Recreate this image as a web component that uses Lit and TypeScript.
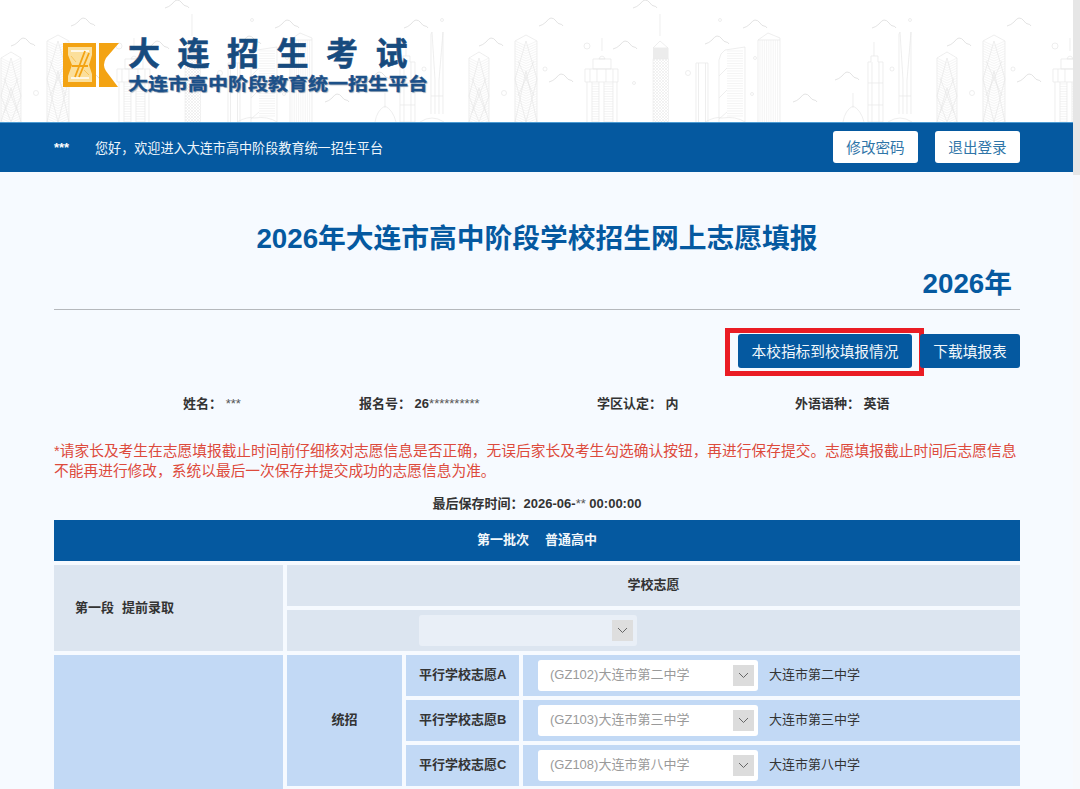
import { LitElement, html, css, svg } from "lit";
import { customElement } from "lit/decorators.js";

const range = (a: number, b: number, step: number) => {
  const out: number[] = [];
  for (let i = a; i < b; i += step) out.push(i);
  return out;
};

const hlines = (x: number, y1: number, w: number, y2: number, step: number) =>
  range(y1, y2, step).map((y) => svg`<line class="ht" x1=${x} y1=${y} x2=${x + w} y2=${y}></line>`);

const vlines = (x1: number, x2: number, step: number, y1: number) =>
  range(x1, x2, step).map((x) => svg`<line class="ht" x1=${x} y1=${y1} x2=${x} y2="122"></line>`);

const lattice = (x: number, top: number, w: number) => {
  const chevrons = range(top, 122, 2.5).map(
    (y) => svg`<path class="ht" d="M${x} ${y}L${x + w / 2} ${y + 5}L${x + w} ${y}"></path>`
  );
  const m = x + w / 2;
  return svg`
    <path class="ln" d="M${x} 122V${top}L${m} ${top - 6}L${x + w} ${top}V122"></path>
    ${chevrons}
    <path class="dk" d="M${m} ${top}L${x} ${top + 38}L${m} 122L${x + w} ${top + 38}ZM${x} 122L${m} ${top + 30}L${x + w} 122M${x + 3} ${top + 20}L${x + w - 3} ${top + 55}M${x + w - 3} ${top + 20}L${x + 3} ${top + 55}"></path>
  `;
};

const cloud = (x: number, y: number) =>
  svg`<path class="cl" d="M${x} ${y}q4 -1 7 -4q3 -4 5 -4q3 0 5 3q2 3 4 3q2 0 3 2"></path>`;
const dot = (x: number, y: number, r: number) =>
  svg`<circle class="ln" cx=${x} cy=${y} r=${r}></circle>`;

const skylineUnit = svg`
  <!-- pagoda -->
  <path class="ln" d="M602 38V51M599 59a3.2 4.5 0 0 1 6 0ZM593 59H611V69H593ZM585 69H618V82H585ZM590 69V82M597 69V82M606 69V82M613 69V82M587 82V122M592 82V122M599 82V122M604 82V122M613 82V122M617 82V122"></path>
  ${hlines(592, 84, 7, 122, 2.5)}${hlines(604, 84, 9, 122, 2.5)}
  <!-- tv tower -->
  <path class="ln" d="M660 14V36M653 48L660 41L668 48Z"></path>
  <rect class="tvb" x="653" y="48" width="15.5" height="11"></rect>
  <rect class="xh" x="653" y="59" width="15.5" height="63"></rect>
  <!-- narrow block -->
  <path class="ln" d="M696 122V63H708V122M698.5 63V122M705.5 63V122"></path>
  <!-- curved -->
  <path class="ln" d="M719 122V60Q720 53 725 50L745 47V122M719 76L727 68M719 98L727 90M719 119L727 112M705 122Q716 116 722 118Q736 116 745 122"></path>
  ${hlines(727, 51, 16, 118, 2.5)}
  <!-- block -->
  <path class="ln" d="M758 122V40L768 33L780 38V122M758 40H780"></path>
  ${vlines(760, 779, 2.2, 40)}
  <!-- dome -->
  <path class="ln" d="M853 93V108M843 122Q845 110 853 106Q861 110 864 122"></path>
  <!-- spire -->
  <path class="ln" d="M874 42V56M871 56H878V62H883V122H868V62H871ZM868 83H883M868 105H883M872 62V122M879 62V122"></path>
  <!-- twin -->
  <path class="ln" d="M899 114V34L900 32L903 80V114M911 114V32L907 80V114M899 96H911M888 122Q900 114 912 122"></path>
  ${lattice(937, 58, 20)}
  ${lattice(983, 41, 22)}
  ${cloud(613, 49)}${cloud(705, 44)}${cloud(743, 28)}${cloud(793, 102)}${cloud(835, 80)}
  ${cloud(872, 28)}${cloud(947, 46)}${cloud(1007, 26)}${cloud(1017, 82)}${cloud(633, 8)}
  ${dot(587, 46, 3)}${dot(634, 83, 1.5)}${dot(688, 73, 2.5)}${dot(720, 20, 1.5)}${dot(755, 58, 1.5)}
  ${dot(752, 94, 1.5)}${dot(892, 69, 2)}${dot(972, 93, 2.5)}${dot(1013, 69, 2)}${dot(910, 20, 1.5)}
`;

@customElement("app-root")
export class AppRoot extends LitElement {
  static styles = css`
    :host { display: block; width: 1080px; height: 789px; overflow: hidden; background: #f6faff; color: #222;
      font-family: "Liberation Sans", "Noto Sans CJK SC", sans-serif; font-size: 13px; }
    .page { display: flex; height: 789px; }
    .main { width: 1073px; flex: none; }
    .scroll { width: 7px; flex: none; background: #f7f9fc; }
    .thumb { height: 175px; background: #e6e6e6; }
    .head { position: relative; height: 122px; background: #fff; overflow: hidden; display: flex; align-items: flex-start; padding-left: 63px; box-sizing: border-box; }
    .sky { position: absolute; left: 0; top: 0; }
    .sky .ln { fill: none; stroke: #e6e6e6; stroke-width: .7; }
    .sky .ht { stroke: #ececec; stroke-width: .6; fill: none; }
    .sky .dk { stroke: #e4e4e4; stroke-width: .6; fill: none; }
    .sky .cl { stroke: #dcdcdc; stroke-width: .8; fill: none; }
    .sky .tvb { fill: #ececec; }
    .sky .xh { fill: url(#xh); stroke: #e8e8e8; stroke-width: .5; }
    .brand { position: relative; display: flex; gap: 9px; margin-top: 36px; }
    .mark { margin-top: 7px; }
    .names { display: flex; flex-direction: column; }
    .big { font-size: 32px; line-height: 37px; font-weight: 700; letter-spacing: 17.5px; color: #174b7e; white-space: nowrap; -webkit-text-stroke: .6px #174b7e; }
    .sub { font-size: 20px; line-height: 20px; font-weight: 700; color: #1c5088; white-space: nowrap; transform-origin: left top; transform: scaleY(.88); margin-top: 2px; -webkit-text-stroke: .4px #1c5088; text-shadow: 1px 1px 1px #9aa8b8; }
    .bar { height: 50px; box-sizing: border-box; background: #0559a0; border-top: 1px solid #4d9bd2; color: #eef5fb; display: flex; align-items: center; padding: 0 53px 1px 54px; }
    .stars { width: 41px; font-weight: 700; color: #fff; }
    .hello { flex: 1; font-size: 13.1px; }
    .light { height: 32px; width: 85px; margin-left: 17px; background: #fff; color: #2f75a8; border: 0; border-radius: 3px; font: inherit; font-size: 14.6px; padding: 0 0 2px; }
    .body { padding: 47px 53px 0 54px; }
    h1 { margin: 0; font-size: 27.75px; line-height: 40px; font-weight: 700; color: #0559a0; text-align: center; }
    .year { margin-top: 5px; padding-right: 8px; text-align: right; }
    hr { margin: 5px 0 0; border: 0; height: 1px; background: #b5b8bc; }
    .actions { display: flex; justify-content: flex-end; gap: 8px; margin-top: 24px; }
    .dark { position: relative; height: 34px; background: #0559a0; color: #f2f7fb; border: 0; border-radius: 3px; font: inherit; font-size: 14.7px; padding: 0 0 1px; }
    .w1 { width: 174px; }
    .w2 { width: 100px; }
    .mark-box { position: absolute; left: -13px; top: -6px; width: 199px; height: 48px; box-sizing: border-box; border: 5px solid #ea1c24; pointer-events: none; }
    .info { display: grid; grid-template-columns: 176px 238px 198px 1fr; margin-top: 26px; padding-left: 129px; line-height: 20px; font-weight: 700; color: #333; }
    .mask { font-weight: 400; color: #555; }
    .notice { margin: 27px 0 0; font-size: 14.73px; line-height: 20px; color: #dd4a3c; white-space: nowrap; }
    .saved { margin-top: 13px; line-height: 20px; text-align: center; font-weight: 700; color: #333; }
    .band { margin-top: 6px; height: 41px; padding-bottom: 4px; box-sizing: border-box; background: #0559a0; color: #f2f7fb; font-weight: 700; display: flex; align-items: center; justify-content: center; gap: 16px; }
    .grid { display: grid; grid-template-columns: 229px 115px 113px 1fr; grid-auto-rows: 41px; gap: 4px; margin-top: 4px; }
    .cell { display: flex; align-items: center; font-weight: 700; color: #333; min-width: 0; box-sizing: border-box; }
    .up { padding-bottom: 4px; }
    .gray { background: #dce5f0; }
    .blue { background: #c2d9f5; }
    .seg { grid-row: span 2; padding-left: 21px; gap: 8px; }
    .wide { grid-column: 2 / 5; justify-content: center; }
    .pick { grid-column: 2 / 5; padding-left: 132px; }
    .tall { grid-row: span 4; }
    .span3 { grid-row: span 3; justify-content: center; }
    .label { padding-left: 13px; }
    .choice { padding-left: 15px; font-weight: 400; gap: 11px; }
    .txt { padding-bottom: 4px; }
    .sel { width: 220px; height: 31px; background: #fff; border-radius: 3px; display: flex; align-items: center; justify-content: space-between; padding: 0 4px 0 12px; box-sizing: border-box; color: #9a9a9a; font-weight: 400; }
    .sel.off { width: 218px; background: #e9eff7; }
    .arrow { width: 21px; height: 21px; background: #dcdcdc; display: flex; align-items: center; justify-content: center; }
    .sel.off .arrow { background: #dedede; }
  `;

  private select(text: string, off = false) {
    return html`<div class="sel ${off ? "off" : ""}"><span class="txt">${text}</span>
      <span class="arrow"><svg width="11" height="7" viewBox="0 0 11 7"><path d="M1 1l4.5 4.5L10 1" fill="none" stroke="#666" stroke-width="1"/></svg></span></div>`;
  }

  private row(label: string, code: string, name: string) {
    return html`<div class="cell blue label up">${label}</div>
      <div class="cell blue choice">${this.select(`(${code})${name}`)}<span class="txt">${name}</span></div>`;
  }

  render() {
    return html`<div class="page">
      <div class="main">
        <header class="head">
          <svg class="sky" width="1073" height="122" viewBox="0 0 1073 122">
            <defs>
              <pattern id="xh" width="3" height="3" patternUnits="userSpaceOnUse">
                <path d="M0 0L3 3M3 0L0 3" stroke="#eaeaea" stroke-width=".6" fill="none"></path>
              </pattern>
            </defs>
            ${[-936, -468, 0, 468].map((dx) => svg`<g transform="translate(${dx} 0)">${skylineUnit}</g>`)}
          </svg>
          <div class="brand">
            <svg class="mark" width="56" height="44" viewBox="0 0 56 44">
              <path fill="#f3a313" d="M0 0H33V44H0Z"/>
              <path fill="#f3a313" d="M36 0H56L43 15Q39 22 43 28L55 44H36Z"/>
              <path fill="#fbdf9b" d="M5 4H29V12L26 22L29 31V39H5V33L9 22L5 12Z"/>
              <path fill="none" stroke="#fff" stroke-width="1.6" d="M8 8H26M8 35H26"/>
              <path fill="none" stroke="#f3a313" stroke-width="1.8" d="M12 34L22 8M16 34L26 10M9 23H25"/>
              <path fill="none" stroke="#f7c35a" stroke-width="1" d="M8 13L13 19M21 27L26 32"/>
            </svg>
            <div class="names">
              <div class="big">大连招生考试</div>
              <div class="sub">大连市高中阶段教育统一招生平台</div>
            </div>
          </div>
        </header>
        <div class="bar">
          <span class="stars">***</span>
          <span class="hello">您好，欢迎进入大连市高中阶段教育统一招生平台</span>
          <button class="light">修改密码</button>
          <button class="light">退出登录</button>
        </div>
        <main class="body">
          <h1>2026年大连市高中阶段学校招生网上志愿填报</h1>
          <h1 class="year">2026年</h1>
          <hr />
          <div class="actions">
            <button class="dark w1">本校指标到校填报情况<span class="mark-box"></span></button>
            <button class="dark w2">下载填报表</button>
          </div>
          <div class="info">
            <span>姓名： <span class="mask">***</span></span>
            <span>报名号： 26<span class="mask">**********</span></span>
            <span>学区认定： 内</span>
            <span>外语语种： 英语</span>
          </div>
          <p class="notice">*请家长及考生在志愿填报截止时间前仔细核对志愿信息是否正确，无误后家长及考生勾选确认按钮，再进行保存提交。志愿填报截止时间后志愿信息<br />不能再进行修改，系统以最后一次保存并提交成功的志愿信息为准。</p>
          <div class="saved">最后保存时间：2026-06-<span class="mask">**</span> 00:00:00</div>
          <div class="band"><span>第一批次</span><span>普通高中</span></div>
          <div class="grid">
            <div class="cell gray seg up"><span>第一段</span><span>提前录取</span></div>
            <div class="cell gray wide up">学校志愿</div>
            <div class="cell gray pick">${this.select("", true)}</div>
            <div class="cell blue tall"></div>
            <div class="cell blue span3 up">统招</div>
            ${this.row("平行学校志愿A", "GZ102", "大连市第二中学")}
            ${this.row("平行学校志愿B", "GZ103", "大连市第三中学")}
            ${this.row("平行学校志愿C", "GZ108", "大连市第八中学")}
          </div>
        </main>
      </div>
      <div class="scroll"><div class="thumb"></div></div>
    </div>`;
  }
}
